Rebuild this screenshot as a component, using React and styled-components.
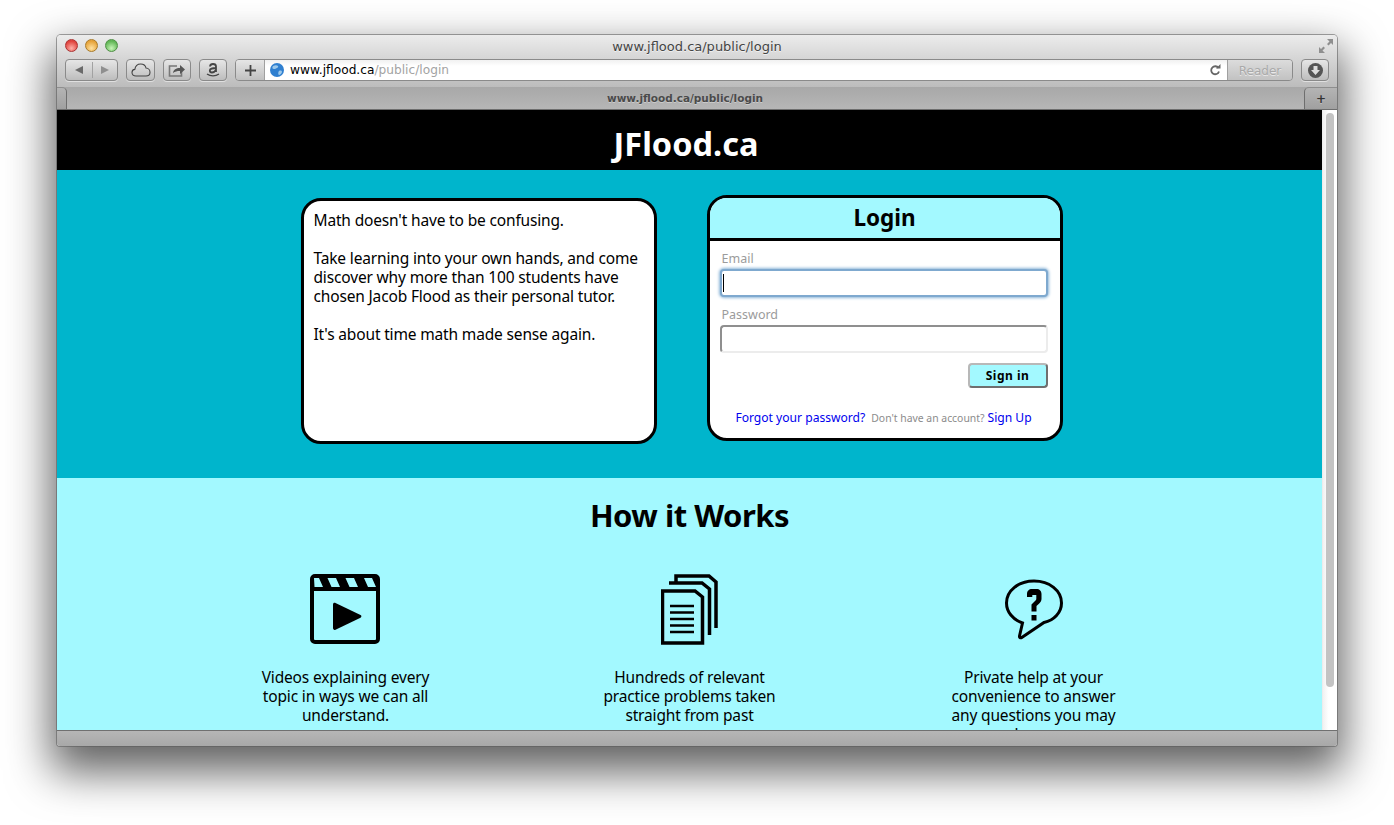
import React from "react";
import styled, { createGlobalStyle } from "styled-components";

const Global = createGlobalStyle`
  html, body { margin: 0; padding: 0; background: #fff; }
  * { box-sizing: border-box; }
`;
const ui = `"DejaVu Sans", sans-serif`;
const body = `"Noto Sans", "Open Sans", sans-serif`;

const Desktop = styled.div`
  width: 1394px; height: 825px; padding: 35px 57px 0; overflow: hidden; background: #fff;
`;
const Win = styled.div`
  width: 1280px; height: 711px; display: flex; flex-direction: column; overflow: hidden;
  border-radius: 4px 4px 3px 3px;
  box-shadow: 0 0 0 1px rgba(90,90,90,.55), 0 20px 44px 6px rgba(0,0,0,.62);
`;
const Chrome = styled.div`
  height: 52px; padding: 0 8px; flex: none;
  background: linear-gradient(#ececec, #d8d8d8 40%, #bcbcbc);
  display: flex; flex-direction: column;
`;
const TitleRow = styled.div`
  height: 24px; padding-bottom: 3px; display: flex; align-items: center; position: relative;
`;
const Lights = styled.div`display: flex; gap: 7px;`;
const Light = styled.span`
  width: 13px; height: 13px; border-radius: 50%;
  border: 1px solid ${p => p.$edge};
  background: radial-gradient(circle at 50% 75%, ${p => p.$glow}, ${p => p.$color} 70%);
`;
const Title = styled.div`
  position: absolute; left: 0; right: 0; top: 4px; text-align: center;
  font: 13px/16px ${ui}; color: #444; text-shadow: 0 1px 0 rgba(255,255,255,.6);
`;
const Expand = styled.svg`position: absolute; right: -4px; top: 4px;`;
const ToolRow = styled.div`display: flex; align-items: center; height: 22px;`;
const Btn = styled.div`
  height: 22px; width: ${p => p.$w}px; margin-left: ${p => p.$ml || 0}px; flex: none;
  display: flex; align-items: center; justify-content: center;
  border: 1px solid #8a8a8a; border-radius: 4px;
  background: linear-gradient(#e6e6e6, #bdbdbd);
  box-shadow: 0 1px 0 rgba(255,255,255,.5);
`;
const Sep = styled.span`width: 1px; height: 16px; background: #a2a2a2; margin: 0 7px 0 8px;`;
const AddrGroup = styled.div`
  flex: none; width: 1058px; margin-left: 8px; height: 22px; display: flex;
  border: 1px solid #8a8a8a; border-radius: 4px; overflow: hidden;
`;
const AddBtn = styled.div`
  width: 29px; flex: none; display: flex; align-items: center; justify-content: center;
  background: linear-gradient(#e6e6e6, #c0c0c0); border-right: 1px solid #a0a0a0;
`;
const Addr = styled.div`
  flex: 1; display: flex; align-items: center; gap: 6px; padding: 0 5px; position: relative;
  background: linear-gradient(#f1f1f1, #fff 30%); font: 12.2px/22px ${ui}; color: #000;
`;
const UrlDim = styled.span`color: #a3a3a3;`;
const Reader = styled.div`
  width: 65px; flex: none; text-align: center; font: 12px/22px ${ui}; color: #a9a9a9;
  background: linear-gradient(#dcdcdc, #c2c2c2); border-left: 1px solid #a0a0a0;
  text-shadow: 0 1px 0 rgba(255,255,255,.6);
`;
const Reload = styled.svg`margin-left: auto; margin-right: 1px;`;
const TabBar = styled.div`
  height: 23px; flex: none; position: relative;
  display: flex; align-items: center; justify-content: center;
  padding-right: 24px;
  background: linear-gradient(#a8a8a8, #b6b6b6);
  border-bottom: 1px solid #6e6e6e;
  font: bold 10.5px/16px ${ui}; color: #4a4a4a;
  text-shadow: 0 1px 0 rgba(255,255,255,.35);
`;
const TabEdge = styled.span`
  position: absolute; top: 0; bottom: -1px; width: ${p => p.$w}px;
  ${p => p.$right
    ? "right: 0; border-left: 1px solid #6e6e6e; border-radius: 5px 0 0 0;"
    : "left: 0; border-right: 1px solid #6e6e6e; border-radius: 0 5px 0 0;"}
  background: linear-gradient(#b4b4b4, #a0a0a0); display: flex; align-items: center; justify-content: center;
  border-top: 1px solid #8e8e8e; border-bottom: 1px solid #6e6e6e; color: #333; font: bold 12px/1 ${ui};
`;
const Viewport = styled.div`flex: 1; min-height: 0; display: flex; background: #fff; overflow: hidden;`;
const Page = styled.div`
  flex: 1; min-width: 0; height: 620px; overflow: hidden; font-family: ${body}; color: #000;
`;
const Scroll = styled.div`
  width: 15px; flex: none; padding: 3px 3px 0 3px; background: linear-gradient(90deg,#f1f1f1,#fff 40%);
  border-left: 1px solid #ececec;
`;
const Thumb = styled.div`height: 574px; width: 8px; border-radius: 4px; background: #c3c3c3;`;
const Status = styled.div`
  height: 16px; flex: none; background: linear-gradient(#b6b6b6, #a8a8a8); border-top: 1px solid #707070;
`;
const Banner = styled.header`
  height: 60px; background: #000; color: #fff; text-align: center; padding-right: 7px;
  font-size: 32.500px; font-weight: 700; line-height: 67px;
`;
const Hero = styled.section`
  height: 308px; background: #00b5cc; display: flex; justify-content: center; align-items: flex-start;
  gap: 50px; padding-right: 16px; padding-top: 25px;
`;
const Card = styled.div`
  width: 356px; height: 246px; border: 3px solid #000; border-radius: 20px; background: #fff;
  overflow: hidden; margin-top: ${p => p.$mt || 0}px;
`;
const Pitch = styled(Card)`
  padding: 10px 10px; font-size: 15.500px; line-height: 19px; letter-spacing: -.16px;
`;
const Para = styled.p`margin: 0 0 19px; white-space: nowrap;`;
const CardHead = styled.div`
  height: 43px; background: #a3f9ff; border-bottom: 3px solid #000; text-align: center;
  font-size: 22.500px; font-weight: 700; line-height: 40px;
`;
const Form = styled.div`padding: 9px 12px 0 10px;`;
const Label = styled.label`display: block; font-size: 12.500px; line-height: 17px; color: #9b9b9b; padding-left: 2px;`;
const Field = styled.div`
  height: 28px; margin: 2px 0 9px; background: #fff; border-radius: 4px;
  border: 2px solid #8f8f8f;
  border-right-color: #ececec; border-bottom-color: #ececec;
  ${p => p.$focus && "border-color: #7fa9cf; box-shadow: 0 0 3px 1px #8db6d8;"}
  display: flex; align-items: center;
`;
const Caret = styled.span`width: 1px; height: 18px; margin-left: 1px; background: #000;`;
const Actions = styled.div`display: flex; justify-content: flex-end; margin-top: 10px;`;
const SignIn = styled.div`
  width: 80px; height: 25px; border-radius: 4px; background: #a3f9ff; text-align: center;
  border: 2px solid #8c8c8c; border-top-color: #b8b8b8; border-left-color: #b8b8b8;
  border-right-color: #6f6f6f; border-bottom-color: #6f6f6f;
  font-size: 12px; font-weight: 700; line-height: 21px; letter-spacing: .5px;
`;
const Foot = styled.div`
  display: flex; justify-content: center; align-items: baseline; margin-top: 21px; white-space: nowrap;
  font-size: 12.100px; line-height: 18px;
`;
const Link = styled.span`color: #0000ee;`;
const Small = styled.span`font-size: 10.400px; color: #8b8b8b; margin: 0 3px 0 6px;`;
const How = styled.section`background: #a3f9ff; height: 252px; text-align: center;`;
const HowTitle = styled.h2`
  margin: 0; padding-top: 15px; height: 96px; font-size: 31px; line-height: 45px; font-weight: 700; letter-spacing: -.5px;
`;
const Cols = styled.div`display: grid; grid-template-columns: repeat(3, 344px); justify-content: center;`;
const Col = styled.div`display: flex; flex-direction: column; align-items: center;`;
const IconWrap = styled.div`
  height: 94px; display: flex; align-items: flex-start; justify-content: center;
  padding-top: ${p => p.$top || 0}px; padding-right: ${p => p.$right || 0}px; padding-left: ${p => p.$left || 0}px;
`;
const Blurb = styled.p`margin: 0; font-size: 15.500px; line-height: 19px; letter-spacing: -.16px; white-space: nowrap;`;

const Clap = () => (
  <svg width="70" height="70" viewBox="0 0 70 70">
    <rect x="2" y="2" width="66" height="66" rx="3" fill="none" stroke="#000" strokeWidth="4" />
    <rect x="2" y="2" width="66" height="15" rx="2" fill="#000" />
    <path d="M4 4h5l4 9H4.500zM17.500 4H26l4 9h-8.500zM35.500 4H44l4 9h-8.500zM54 4h8l4 9h-8z" fill="#a3f9ff" />
    <path d="M23 30.500c0-1.500 1.200-2.200 2.500-1.600l25 12.200c1.200.6 1.200 2 0 2.600l-25 12c-1.300.6-2.500-.1-2.500-1.600z" fill="#000" />
  </svg>
);
const Docs = () => (
  <svg width="58" height="72" viewBox="0 0 58 72" fill="none" stroke="#000">
    <path d="M15 8V2h33l7 6v46" strokeWidth="3.500" />
    <path d="M8 9V9h33l7.500 6v46" strokeWidth="3.500" />
    <path d="M1.500 17H34l7.500 6v46H1.500z" strokeWidth="3.500" fill="#a3f9ff" />
    <path d="M9 32h24M9 38.500h24M9 45h24M9 51.500h24M9 58h24" strokeWidth="2.500" />
  </svg>
);
const Ask = () => (
  <svg width="60" height="62" viewBox="0 0 60 62" fill="none">
    <path d="M30 2C14.500 2 2.500 11.500 2.500 24c0 9 6.300 16.500 16 20l-3 13c-.3 1.600 1 2.300 2.300 1.500L40 43.500C50 41.500 57.500 33.500 57.500 24 57.500 11.500 45.500 2 30 2z" stroke="#000" strokeWidth="3" />
    <path d="M23 18v-3c0-3 2-5 5-5h4.500c3 0 5 2 5 5v5c0 2-1 3-2.300 4.500L32.500 27v5.500h-5v-7l4-4c.6-.6.8-1 .8-1.800V16h-4v2z" fill="#000" />
    <rect x="27.500" y="36" width="5" height="5.500" fill="#000" />
  </svg>
);

export default function App() {
  return (
    <Desktop>
      <Global />
      <Win>
        <Chrome>
          <TitleRow>
            <Lights>
              <Light $color="#e0443e" $glow="#ffb0a8" $edge="#a33" />
              <Light $color="#e6a33a" $glow="#ffe2a0" $edge="#a87a2a" />
              <Light $color="#62b757" $glow="#c8f5b8" $edge="#4f8f45" />
            </Lights>
            <Title>www.jflood.ca/public/login</Title>
            <Expand width="14" height="14" viewBox="0 0 14 14" fill="#8f8f8f">
              <path d="M8 0h6v6l-2-2-2.500 2.500-1.500-1.500L10.500 2.500zM0 14V8l2 2 2.500-2.500L6 9l-2.500 2.500L6 14z" />
            </Expand>
          </TitleRow>
          <ToolRow>
            <Btn $w={53}>
              <svg width="10" height="10" viewBox="0 0 10 10"><path d="M9 1v8L1 5z" fill="#6a6a6a" /></svg>
              <Sep />
              <svg width="10" height="10" viewBox="0 0 10 10"><path d="M1 1v8l8-4z" fill="#8f8f8f" /></svg>
            </Btn>
            <Btn $w={29} $ml={8}>
              <svg width="20" height="14" viewBox="0 0 20 14" fill="none" stroke="#444" strokeWidth="1.100"><path d="M5 13C2.500 13 1 11.500 1 9.500 1 7.800 2.200 6.500 3.800 6.400 4.300 3.500 6.500 1 9.700 1c2.800 0 4.800 1.700 5.300 4 2.300.1 4 2 4 4.200C19 11.400 17.300 13 15 13z" /></svg>
            </Btn>
            <Btn $w={28} $ml={8}>
              <svg width="18" height="14" viewBox="0 0 18 14" fill="none"><path d="M9 3H1.500v10h12V8" stroke="#777" strokeWidth="1.600" /><path d="M5 10c.5-3.500 3-5 7-5V2l5 4.500L12 11V8C9 8 7 8.500 5 10z" fill="#555" /></svg>
            </Btn>
            <Btn $w={28} $ml={8}>
              <svg width="18" height="18" viewBox="0 0 18 18" fill="none"><path d="M6 5.500C6.200 3.800 7.300 3 9 3c2 0 3 1 3 2.500V11M12 7C8 7 5.800 7.800 5.800 9.500 5.800 11 7 11.500 8 11.500c1.800 0 3-1 4-2.500" stroke="#444" strokeWidth="1.800" /><path d="M3 13c3.500 2.500 8.500 2.500 12 0" stroke="#444" strokeWidth="1.300" /></svg>
            </Btn>
            <AddrGroup>
              <AddBtn><svg width="11" height="11" viewBox="0 0 11 11"><path d="M5.500 0v11M0 5.500h11" stroke="#444" strokeWidth="1.800" /></svg></AddBtn>
              <Addr>
                <svg width="14" height="14" viewBox="0 0 14 14"><circle cx="7" cy="7" r="7" fill="#2f7fd0" /><path d="M3 3c2-1 4-1 5 0S6 6 4 6 2 4 3 3zM9 8c2-1 3 0 3 1s-2 3-3 3-1-3 0-4z" fill="#9cc8ea" /></svg>
                <span>www.jflood.ca<UrlDim>/public/login</UrlDim></span>
                <Reload width="12" height="12" viewBox="0 0 12 12" fill="none"><path d="M9.500 4A4 4 0 1 0 10 7.500" stroke="#666" strokeWidth="1.800" /><path d="M7 4.500h4.500V0z" fill="#666" /></Reload>
              </Addr>
              <Reader>Reader</Reader>
            </AddrGroup>
            <Btn $w={28} $ml={8}>
              <svg width="15" height="15" viewBox="0 0 15 15"><circle cx="7.500" cy="7.500" r="7.500" fill="#555" /><path d="M5.500 3h4v4H12l-4.500 5L3 7h2.500z" fill="#ddd" /></svg>
            </Btn>
          </ToolRow>
        </Chrome>
        <TabBar>
          <TabEdge $w={10} />
          www.jflood.ca/public/login
          <TabEdge $right $w={33}>+</TabEdge>
        </TabBar>
        <Viewport>
          <Page>
            <Banner>JFlood.ca</Banner>
            <Hero>
              <Pitch $mt={3}>
                <Para>Math doesn't have to be confusing.</Para>
                <Para>Take learning into your own hands, and come<br />discover why more than 100 students have<br />chosen Jacob Flood as their personal tutor.</Para>
                <Para>It's about time math made sense again.</Para>
              </Pitch>
              <Card>
                <CardHead>Login</CardHead>
                <Form>
                  <Label>Email</Label>
                  <Field $focus><Caret /></Field>
                  <Label>Password</Label>
                  <Field />
                  <Actions><SignIn>Sign in</SignIn></Actions>
                  <Foot><Link>Forgot your password?</Link><Small>Don't have an account?</Small><Link>Sign Up</Link></Foot>
                </Form>
              </Card>
            </Hero>
            <How>
              <HowTitle>How it Works</HowTitle>
              <Cols>
                <Col><IconWrap $right={2}><Clap /></IconWrap><Blurb>Videos explaining every<br />topic in ways we can all<br />understand.</Blurb></Col>
                <Col><IconWrap $left={1}><Docs /></IconWrap><Blurb>Hundreds of relevant<br />practice problems taken<br />straight from past<br />exams.</Blurb></Col>
                <Col><IconWrap $top={5}><Ask /></IconWrap><Blurb>Private help at your<br />convenience to answer<br />any questions you may<br />have.</Blurb></Col>
              </Cols>
            </How>
          </Page>
          <Scroll><Thumb /></Scroll>
        </Viewport>
        <Status />
      </Win>
    </Desktop>
  );
}
